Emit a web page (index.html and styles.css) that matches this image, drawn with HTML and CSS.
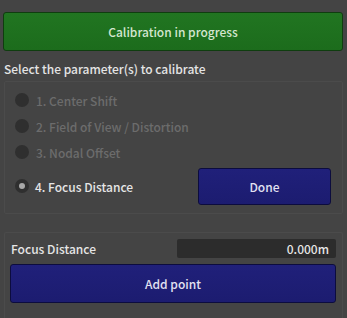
FILE: index.html
```html
<!DOCTYPE html>
<html>
<head>
<meta charset="utf-8">
<link rel="stylesheet" href="styles.css">
</head>
<body>
<div class="app">
  <div class="status">Calibration in progress</div>
  <div class="heading">Select the parameter(s) to calibrate</div>
  <div class="panel params">
    <div class="row disabled"><span class="radio"></span><span>1. Center Shift</span></div>
    <div class="row disabled"><span class="radio"></span><span>2. Field of View / Distortion</span></div>
    <div class="row disabled"><span class="radio"></span><span>3. Nodal Offset</span></div>
    <div class="row active">
      <div class="opt"><span class="radio on"></span><span>4. Focus Distance</span></div>
      <button class="btn done">Done</button>
    </div>
  </div>
  <div class="panel points">
    <div class="field">
      <span class="flabel">Focus Distance</span>
      <span class="input">0.000m</span>
    </div>
    <button class="btn add">Add point</button>
  </div>
</div>
</body>
</html>
```
FILE: styles.css
```css
html, body {
  margin: 0;
  padding: 0;
  background: #444444;
  height: 100%;
  overflow: hidden;
}
.app {
  font-family: "Noto Sans CJK JP", "Noto Sans", sans-serif;
  font-size: 12px;
  font-weight: 500;
  color: #e2e2e2;
  display: flex;
  flex-direction: column;
  padding: 12px 4px 0 3px;
}
.status {
  height: 37px;
  background: linear-gradient(#217521, #1c6c1c);
  border: 1px solid #0f3d0f;
  border-radius: 3px;
  color: #d4e6cf;
  display: flex;
  align-items: center;
  justify-content: center;
}
.heading {
  margin: 9px 0 0 1px;
  line-height: 18px;
  color: #e4e4e4;
}
.panel {
  margin-left: 1px;
  border: 1px solid #4b4b4b;
  border-radius: 2px;
}
.params {
  margin-top: 3px;
  box-sizing: border-box;
  height: 133px;
  padding: 5px 11px 0 10px;
  display: flex;
  flex-direction: column;
}
.row {
  height: 26px;
  display: flex;
  align-items: center;
  gap: 7px;
}
.row.disabled { color: #6c6c6c; }
.row.active {
  margin-top: 2px;
  height: 38px;
  justify-content: space-between;
}
.opt {
  display: flex;
  align-items: center;
  gap: 6px;
  color: #e6e6e6;
}
.radio {
  width: 14px;
  height: 14px;
  border-radius: 50%;
  background: #2f2f2f;
  flex: none;
  display: flex;
  align-items: center;
  justify-content: center;
}
.radio.on::after {
  content: "";
  width: 6px;
  height: 6px;
  border-radius: 50%;
  background: #a8a8a8;
}
.btn {
  font: inherit;
  color: #e2e2f2;
  background: linear-gradient(#20207a, #1c1c70);
  border: 1px solid #0c0c3e;
  border-radius: 3px;
  padding: 0;
}
.done {
  width: 133px;
  height: 37px;
}
.points {
  margin-top: 18px;
  padding: 5px 6px 20px 5px;
  display: flex;
  flex-direction: column;
  gap: 6px;
  border-bottom: none;
}
.field {
  height: 20px;
  display: flex;
  align-items: center;
  justify-content: space-between;
}
.flabel {
  padding-left: 1px;
  color: #e6e6e6;
}
.input {
  width: 152px;
  height: 19px;
  background: #2c2c2c;
  border-radius: 2px;
  padding-right: 7px;
  text-align: right;
  line-height: 19px;
  color: #e6e6e6;
}
.add {
  height: 39px;
}
```
